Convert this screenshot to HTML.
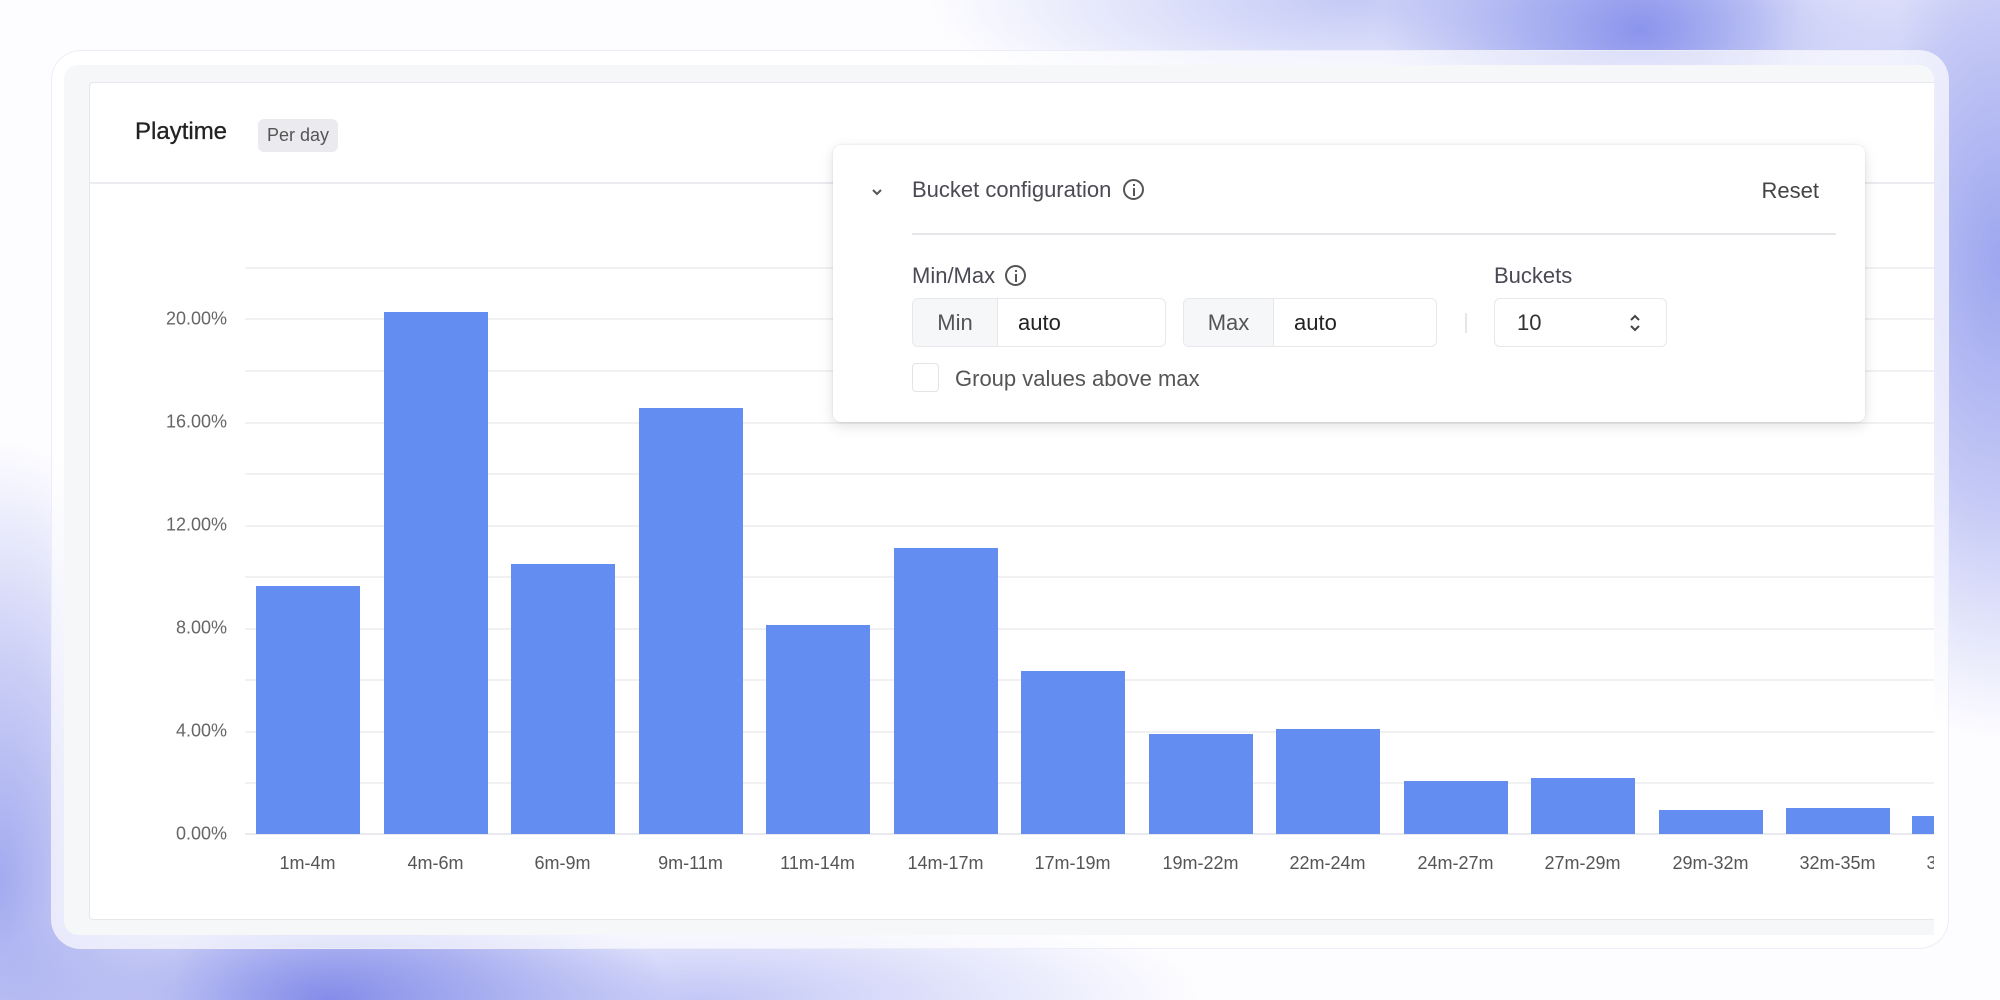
<!DOCTYPE html>
<html><head><meta charset="utf-8"><style>
*{margin:0;padding:0;box-sizing:border-box}
body{width:2000px;height:1000px;overflow:hidden;position:relative;font-family:"Liberation Sans",sans-serif;
background:
radial-gradient(ellipse 260px 170px at 1640px 30px,#8a94ec 0%,rgba(138,148,236,.6) 45%,rgba(138,148,236,0) 100%),
radial-gradient(ellipse 230px 480px at 2000px 260px,#9ea6ef 0%,rgba(158,166,239,.6) 50%,rgba(158,166,239,0) 100%),
radial-gradient(ellipse 420px 130px at 1350px 0px,rgba(190,196,245,.9) 0%,rgba(190,196,245,0) 100%),
radial-gradient(ellipse 340px 150px at 330px 1000px,#838ce9 0%,rgba(131,140,233,.6) 45%,rgba(131,140,233,0) 100%),
radial-gradient(ellipse 180px 440px at 0px 880px,#a3aaef 0%,rgba(163,170,239,.55) 50%,rgba(163,170,239,0) 100%),
radial-gradient(ellipse 500px 120px at 700px 1000px,rgba(180,186,244,.8) 0%,rgba(180,186,244,0) 100%),
#fdfdff}
.outer{position:absolute;left:51px;top:50px;width:1898px;height:899px;border-radius:30px;background:rgba(255,255,255,.68);border:1.5px solid rgba(235,236,248,.95)}
.gray{position:absolute;left:64px;top:65px;width:1870px;height:870px;border-radius:14px 14px 0 14px;background:#f6f7f9}
.card{position:absolute;left:89px;top:82px;width:1845px;height:838px;background:#fff;border:1.5px solid #e8e8ec;border-right:none;border-radius:4px 0 0 4px;overflow:hidden}
.title{position:absolute;left:45px;top:35px;font-size:24px;color:#222;-webkit-text-stroke:0.3px #222}
.badge{position:absolute;left:168px;top:36px;height:33px;padding:0 9px;line-height:33px;background:#ebebef;border-radius:6px;font-size:18px;color:#555}
.hdiv{position:absolute;left:0;right:0;top:99px;height:2px;background:#ececf0}
.grid{position:absolute;left:155px;right:0;height:2px;background:#f1f1f3}
.yl{position:absolute;right:1708px;font-size:18px;color:#666;transform:translateY(-50%)}
.bar{position:absolute;width:104px;background:#648df2;bottom:0}
.xl{position:absolute;top:770px;width:127px;text-align:center;font-size:18px;color:#555}
.pop{position:absolute;left:833px;top:145px;width:1032px;height:277px;background:#fff;border-radius:8px;box-shadow:0 4px 14px rgba(0,0,0,.12),0 0 2px rgba(0,0,0,.1);font-size:22px;color:#4a4a55}
.pop .t{position:absolute}
.info{display:inline-block;width:21px;height:21px;border:2px solid #555;border-radius:50%;position:relative;vertical-align:middle}
.info:before{content:"";position:absolute;left:7.5px;top:3px;width:2px;height:2px;background:#555}
.info:after{content:"";position:absolute;left:7.5px;top:7px;width:2px;height:8px;background:#555}
.grp{position:absolute;top:153px;height:49px;border:1.5px solid #e8e8ec;border-radius:6px;overflow:hidden;display:flex}
.add{background:#f6f7f9;border-right:1.5px solid #e8e8ec;color:#555;display:flex;align-items:center;justify-content:center}
.val{display:flex;align-items:center;padding-left:20px;color:#222}
</style></head><body>
<div class="outer"></div>
<div class="gray"></div>
<div class="card">
  <div class="title">Playtime</div>
  <div class="badge">Per day</div>
  <div class="hdiv"></div>
  <div style="position:absolute;left:0;top:0;width:1845px;height:838px">
    <div class="grid" style="top:184px"></div>
    <div class="grid" style="top:235px"></div>
    <div class="grid" style="top:287px"></div>
    <div class="grid" style="top:339px"></div>
    <div class="grid" style="top:390px"></div>
    <div class="grid" style="top:442px"></div>
    <div class="grid" style="top:493px"></div>
    <div class="grid" style="top:545px"></div>
    <div class="grid" style="top:596px"></div>
    <div class="grid" style="top:648px"></div>
    <div class="grid" style="top:699px"></div>
    <div class="grid" style="top:750px;background:#e9e9ee"></div>
    <div class="yl" style="top:236px">20.00%</div>
    <div class="yl" style="top:339px">16.00%</div>
    <div class="yl" style="top:442px">12.00%</div>
    <div class="yl" style="top:545px">8.00%</div>
    <div class="yl" style="top:648px">4.00%</div>
    <div class="yl" style="top:751px">0.00%</div>
    <div style="position:absolute;left:0;top:0;width:1845px;height:751px">
      <div class="bar" style="left:166px;height:248px"></div>
      <div class="bar" style="left:294px;height:522px"></div>
      <div class="bar" style="left:421px;height:270px"></div>
      <div class="bar" style="left:549px;height:426px"></div>
      <div class="bar" style="left:676px;height:209px"></div>
      <div class="bar" style="left:804px;height:286px"></div>
      <div class="bar" style="left:931px;height:163px"></div>
      <div class="bar" style="left:1059px;height:100px"></div>
      <div class="bar" style="left:1186px;height:105px"></div>
      <div class="bar" style="left:1314px;height:53px"></div>
      <div class="bar" style="left:1441px;height:56px"></div>
      <div class="bar" style="left:1569px;height:24px"></div>
      <div class="bar" style="left:1696px;height:26px"></div>
      <div class="bar" style="left:1822px;height:18px"></div>
    </div>
    <div class="xl" style="left:154px">1m-4m</div>
    <div class="xl" style="left:282px">4m-6m</div>
    <div class="xl" style="left:409px">6m-9m</div>
    <div class="xl" style="left:537px">9m-11m</div>
    <div class="xl" style="left:664px">11m-14m</div>
    <div class="xl" style="left:792px">14m-17m</div>
    <div class="xl" style="left:919px">17m-19m</div>
    <div class="xl" style="left:1047px">19m-22m</div>
    <div class="xl" style="left:1174px">22m-24m</div>
    <div class="xl" style="left:1302px">24m-27m</div>
    <div class="xl" style="left:1429px">27m-29m</div>
    <div class="xl" style="left:1557px">29m-32m</div>
    <div class="xl" style="left:1684px">32m-35m</div>
    <div class="xl" style="left:1811px">35m-38m</div>
  </div>
</div>
<div class="pop">
  <svg class="t" style="left:37px;top:42px" width="14" height="10" viewBox="0 0 14 10"><path d="M3 3 L7 7 L11 3" fill="none" stroke="#555" stroke-width="2"/></svg>
  <div class="t" style="left:79px;top:32px">Bucket configuration <span class="info" style="margin-left:6px;top:-2px"></span></div>
  <div class="t" style="right:46px;top:33px;color:#444">Reset</div>
  <div class="t" style="left:79px;right:29px;top:88px;height:2px;background:#e6e6ea"></div>
  <div class="t" style="left:79px;top:118px">Min/Max <span class="info" style="margin-left:4px;top:-2px"></span></div>
  <div class="t" style="left:661px;top:118px">Buckets</div>
  <div class="grp" style="left:79px;width:254px"><div class="add" style="width:85px">Min</div><div class="val">auto</div></div>
  <div class="grp" style="left:350px;width:254px"><div class="add" style="width:90px">Max</div><div class="val">auto</div></div>
  <div class="t" style="left:632px;top:168px;width:2px;height:20px;background:#e6e6ea"></div>
  <div class="grp" style="left:661px;width:173px"><div class="val" style="padding-left:22px;color:#333">10</div>
    <svg style="position:absolute;left:133px;top:14px" width="14" height="20" viewBox="0 0 14 20"><path d="M3 7 L7 3 L11 7 M3 13 L7 17 L11 13" fill="none" stroke="#444" stroke-width="2"/></svg></div>
  <div class="t" style="left:79px;top:218px;width:27px;height:29px;border:1.5px solid #e3e3e8;border-radius:4px"></div>
  <div class="t" style="left:122px;top:221px;color:#555">Group values above max</div>
</div>
</body></html>
